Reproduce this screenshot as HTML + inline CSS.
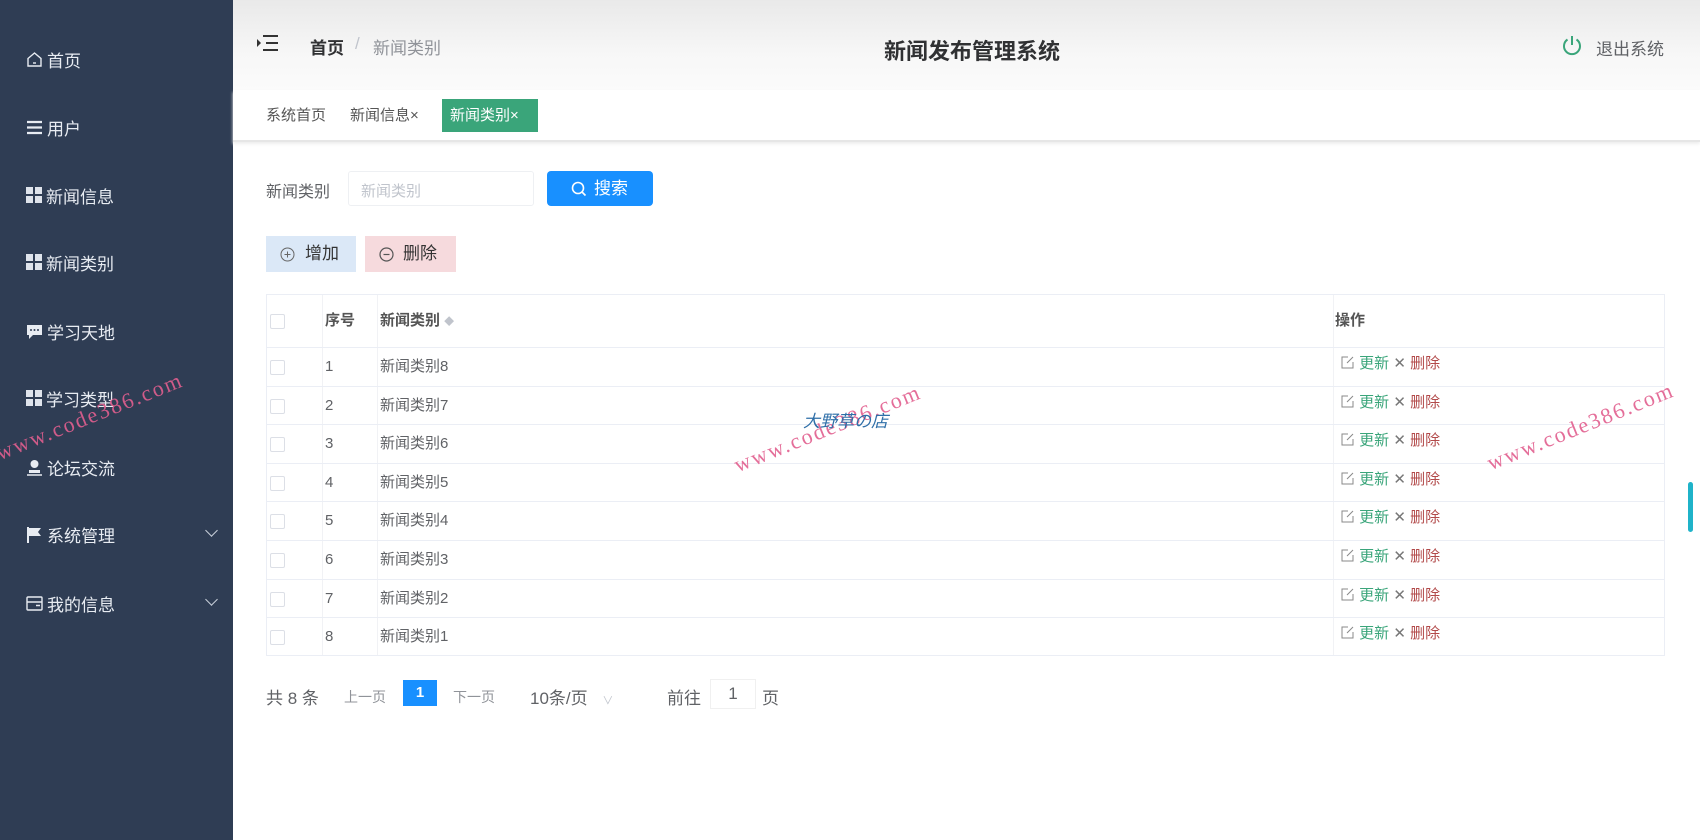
<!DOCTYPE html>
<html><head><meta charset="utf-8"><style>
*{margin:0;padding:0;box-sizing:border-box}
body{width:1700px;height:840px;overflow:hidden;background:#fff;font-family:"Liberation Sans","Noto Sans CJK SC",sans-serif;color:#606266;position:relative}
.side{position:absolute;left:0;top:0;width:233px;height:840px;background:#2f3d54}
.mi{position:absolute;left:26px;color:#e8ecf2;font-size:17px;display:flex;align-items:center;height:24px;width:190px}
.mi .ic{width:17px;height:17px;margin-right:4px;display:inline-block}
.mi .arr{position:absolute;right:0;top:4px;width:9px;height:9px;border-right:1.5px solid #c9d0db;border-bottom:1.5px solid #c9d0db;transform:rotate(45deg)}
.grid{background:
linear-gradient(#dfe4ec,#dfe4ec) 0 0/7px 7px no-repeat,
linear-gradient(#dfe4ec,#dfe4ec) 9px 0/7px 7px no-repeat,
linear-gradient(#dfe4ec,#dfe4ec) 0 9px/7px 7px no-repeat,
linear-gradient(#dfe4ec,#dfe4ec) 9px 9px/7px 7px no-repeat}
.header{position:absolute;left:233px;top:0;width:1467px;height:90px;background:linear-gradient(#e9e9e9,#f7f7f7 60%,#fbfbfb)}
.tabs{position:absolute;left:233px;top:90px;width:1467px;height:52px;background:#fff;border-bottom:2px solid #e6e6e6;box-shadow:0 2px 3px #eee}
.abs{position:absolute;white-space:nowrap}
.tbl{position:absolute;left:266px;top:294px;width:1399px;height:362px;border:1px solid #ebeef5;overflow:hidden}
.row{position:absolute;left:0;width:1397px;height:38.6px;border-bottom:1px solid #ebeef5;font-size:15px;color:#606266;line-height:38px}
.row .abs{top:0}
.cb{position:absolute;left:3px;width:15px;height:15px;border:1px solid #dcdfe6;border-radius:2px;background:#fff}
.vl{position:absolute;top:0;width:1px;height:360px;background:#f1f2f5}
.wm{position:absolute;color:#e25f8f;font-family:"Liberation Serif",serif;font-size:22px;letter-spacing:2px;transform:rotate(-22deg);transform-origin:left bottom;white-space:nowrap;opacity:.9}
</style></head><body>
<div class="side">
 <div class="mi" style="top:47px"><svg class="ic" viewBox="0 0 17 17"><path d="M2 7.5L8.5 2 15 7.5V15H2Z" fill="none" stroke="#e8ecf2" stroke-width="1.4"/><path d="M7 12h3" stroke="#e8ecf2" stroke-width="1.4"/></svg>首页</div>
 <div class="mi" style="top:115px"><svg class="ic" viewBox="0 0 17 17"><path d="M1 3h15M1 8.5h15M1 14h15M1 3h3M1 8.5h3" stroke="#e8ecf2" stroke-width="2.2"/></svg>用户</div>
 <div class="mi" style="top:183px"><span class="ic grid" style="width:16px;height:16px"></span>新闻信息</div>
 <div class="mi" style="top:250px"><span class="ic grid" style="width:16px;height:16px"></span>新闻类别</div>
 <div class="mi" style="top:319px"><svg class="ic" viewBox="0 0 17 17"><path d="M1 2h15v10H7l-4 4v-4H1Z" fill="#e8ecf2"/><circle cx="5" cy="7" r="1" fill="#2f3d54"/><circle cx="8.5" cy="7" r="1" fill="#2f3d54"/><circle cx="12" cy="7" r="1" fill="#2f3d54"/></svg>学习天地</div>
 <div class="mi" style="top:386px"><span class="ic grid" style="width:16px;height:16px"></span>学习类型</div>
 <div class="mi" style="top:455px"><svg class="ic" viewBox="0 0 17 17"><circle cx="8.5" cy="5" r="4" fill="#e8ecf2"/><path d="M3 11h11v3H3z" fill="#e8ecf2"/><path d="M1 16h15" stroke="#e8ecf2" stroke-width="1.5"/></svg>论坛交流</div>
 <div class="mi" style="top:522px"><svg class="ic" viewBox="0 0 17 17"><path d="M2 1v16" stroke="#e8ecf2" stroke-width="2"/><path d="M3 2h12l-3 4 3 4H3z" fill="#e8ecf2"/></svg>系统管理<span class="arr"></span></div>
 <div class="mi" style="top:591px"><svg class="ic" viewBox="0 0 17 17"><rect x="1" y="2" width="15" height="13" rx="1" fill="none" stroke="#e8ecf2" stroke-width="1.4"/><path d="M1 7h15M10 10.5h4" stroke="#e8ecf2" stroke-width="1.4"/></svg>我的信息<span class="arr"></span></div>
</div>
<div class="header">
 <svg class="abs" style="left:24px;top:34px" width="22" height="18" viewBox="0 0 22 18"><path d="M6 2h15M9 9h12M6 16h15" stroke="#333" stroke-width="2"/><path d="M0 5l4 4-4 4" fill="#333"/></svg>
 <div class="abs" style="left:77px;top:34px;font-size:17px;font-weight:bold;color:#303133">首页</div>
 <div class="abs" style="left:122px;top:34px;font-size:17px;color:#c0c4cc">/</div>
 <div class="abs" style="left:140px;top:34px;font-size:17px;color:#909399">新闻类别</div>
 <div class="abs" style="left:651px;top:34px;font-size:22px;font-weight:bold;color:#303133">新闻发布管理系统</div>
 <svg class="abs" style="left:1328px;top:35px" width="22" height="22" viewBox="0 0 22 22"><path d="M6.5 4.5A8 8 0 1 0 15.5 4.5" fill="none" stroke="#3aa57a" stroke-width="2"/><path d="M11 1v9" stroke="#3aa57a" stroke-width="2"/></svg>
 <div class="abs" style="left:1363px;top:35px;font-size:17px;color:#606266">退出系统</div>
</div>
<div class="tabs">
 <div class="abs" style="left:33px;top:14px;font-size:15px;color:#555">系统首页</div>
 <div class="abs" style="left:117px;top:14px;font-size:15px;color:#555">新闻信息×</div>
 <div class="abs" style="left:209px;top:9px;width:96px;height:33px;background:#3aa57a;color:#fff;font-size:15px;line-height:33px;padding-left:8px">新闻类别×</div>
</div>
<div class="abs" style="left:266px;top:178px;font-size:16px;color:#606266">新闻类别</div>
<div class="abs" style="left:348px;top:171px;width:186px;height:35px;border:1px solid #eef0f3;border-radius:3px;font-size:15px;color:#c0c4cc;padding:8px 12px">新闻类别</div>
<div class="abs" style="left:547px;top:171px;width:106px;height:35px;background:#1890ff;border-radius:4px;color:#fff;font-size:17px;line-height:35px;padding-left:26px"><svg style="position:absolute;left:24px;top:10px" width="16" height="16" viewBox="0 0 16 16"><circle cx="7" cy="7" r="5.5" fill="none" stroke="#fff" stroke-width="1.6"/><path d="M11 11l3.5 3.5" stroke="#fff" stroke-width="1.6"/></svg><span style="margin-left:21px">搜索</span></div>
<div class="abs" style="left:266px;top:236px;width:90px;height:36px;background:#dbe8f7;font-size:17px;color:#333;line-height:36px;padding-left:39px">增加<svg style="position:absolute;left:14px;top:11px" width="15" height="15" viewBox="0 0 15 15"><circle cx="7.5" cy="7.5" r="6.5" fill="none" stroke="#666" stroke-width="1"/><path d="M4.5 7.5h6M7.5 4.5v6" stroke="#666"/></svg></div>
<div class="abs" style="left:365px;top:236px;width:91px;height:36px;background:#f6dadd;font-size:17px;color:#333;line-height:36px;padding-left:38px">删除<svg style="position:absolute;left:14px;top:11px" width="15" height="15" viewBox="0 0 15 15"><circle cx="7.5" cy="7.5" r="6.5" fill="none" stroke="#555" stroke-width="1.2"/><path d="M4.5 7.5h6" stroke="#555" stroke-width="1.2"/></svg></div>
<div class="tbl">
 <div class="vl" style="left:55px"></div><div class="vl" style="left:110px"></div><div class="vl" style="left:1066px"></div>
 <div class="row" style="top:0;height:53px;line-height:52px;font-weight:bold;color:#555"><div class="cb" style="top:19px"></div><div class="abs" style="left:58px">序号</div><div class="abs" style="left:113px">新闻类别 <span style="color:#c0c4cc;font-size:10px">◆</span></div><div class="abs" style="left:1068px">操作</div></div>
 <script>
 var h='';for(var i=0;i<8;i++){var t=53+i*38.6;h+='<div class="row" style="top:'+t+'px"><div class="cb" style="top:12px"></div><div class="abs" style="left:58px">'+(i+1)+'</div><div class="abs" style="left:113px">新闻类别'+(8-i)+'</div><div class="abs" style="left:1074px;top:-3px;color:#3aa57a"><svg width="14" height="14" viewBox="0 0 14 14" style="vertical-align:-1px"><path d="M12 7v6H1V2h6" fill="none" stroke="#888" stroke-width="1"/><path d="M6 8l6-6" stroke="#888"/></svg> 更新 <span style="color:#777">✕</span> <span style="color:#b24a4a">删除</span></div></div>';}document.write(h);
 </script>
</div>
<div class="abs" style="left:266px;top:684px;font-size:17px;color:#606266">共 8 条</div>
<div class="abs" style="left:344px;top:687px;font-size:14px;color:#909399">上一页</div>
<div class="abs" style="left:403px;top:680px;width:34px;height:26px;background:#1890ff;color:#fff;font-size:15px;font-weight:bold;text-align:center;line-height:26px">1</div>
<div class="abs" style="left:453px;top:687px;font-size:14px;color:#909399">下一页</div>
<div class="abs" style="left:530px;top:684px;font-size:17px;color:#606266">10条/页 <span style="color:#c0c4cc;font-size:11px;margin-left:10px">∨</span></div>
<div class="abs" style="left:667px;top:684px;font-size:17px;color:#606266">前往</div>
<div class="abs" style="left:710px;top:679px;width:46px;height:30px;border:1px solid #f0f0f0;text-align:center;font-size:17px;line-height:28px;color:#606266">1</div>
<div class="abs" style="left:762px;top:684px;font-size:17px;color:#606266">页</div>
<div class="abs" style="left:1688px;top:482px;width:5px;height:50px;background:#1fb3c9;border-radius:3px"></div>
<div class="wm" style="left:2px;top:440px">www.code386.com</div>
<div class="wm" style="left:740px;top:452px">www.code386.com</div>
<div class="wm" style="left:1493px;top:450px">www.code386.com</div>
<div class="abs" style="left:803px;top:407px;font-size:17px;font-style:italic;color:#2f6fa8">大野草の店</div>
</body></html>
